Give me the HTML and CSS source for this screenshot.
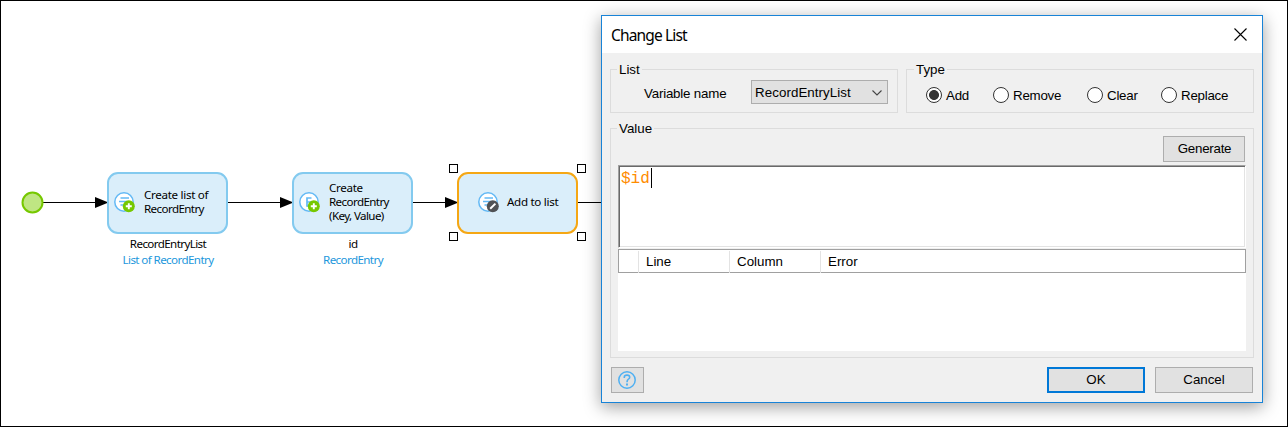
FILE: index.html
```html
<!DOCTYPE html>
<html lang="en">
<head>
<meta charset="utf-8">
<title>Change List</title>
<link rel="stylesheet" href="styles.css">
</head>
<body>
<div class="canvas">
  <svg class="wires" width="620" height="425" viewBox="1 1 620 425">
    <g stroke="#000" stroke-width="1" shape-rendering="crispEdges">
      <path d="M43 202.500H96M227 202.500H281M412 202.500H446M577 202.500H602"/>
    </g>
    <path d="M95 197l13.500 5.500-13.500 5.500zM280 197l13.500 5.500-13.500 5.500zM445 197l13.500 5.500-13.500 5.500z"/>
    <circle cx="32.500" cy="202.500" r="10" fill="#bfe683" stroke="#76c800" stroke-width="2"/>
  </svg>

  <div class="node node-list">
    <svg class="badge" width="22" height="22" viewBox="0 0 22 22">
      <circle cx="10" cy="10" r="9.200" fill="#fff" stroke="#63b9f5" stroke-width="1.500"/>
      <path d="M6.500 6h8.500M5 9.500h8.500M6.500 13h6" stroke="#63b9f5" stroke-width="1.500"/>
      <circle cx="14.800" cy="14.200" r="6" fill="#76c800"/>
      <path d="M11.800 14.200h6M14.800 11.200v6" stroke="#fff" stroke-width="1.900"/>
    </svg>
    <span class="node-text t-create"><span class="loose">Create list of</span><br>RecordEntry</span>
  </div>
  <div class="caption cap-list"><span>RecordEntryList</span><span class="kind">List of RecordEntry</span></div>

  <div class="node node-entry">
    <svg class="badge" width="22" height="22" viewBox="0 0 22 22">
      <circle cx="10" cy="10" r="9.200" fill="#fff" stroke="#63b9f5" stroke-width="1.500"/>
      <path d="M12.500 6h-4.500v8h4.500M8 10h4" fill="none" stroke="#63b9f5" stroke-width="1.700"/>
      <circle cx="14.800" cy="14.200" r="6" fill="#76c800"/>
      <path d="M11.800 14.200h6M14.800 11.200v6" stroke="#fff" stroke-width="1.900"/>
    </svg>
    <span class="node-text t-entry"><span class="loose">Create</span><br>RecordEntry<br>(Key, Value)</span>
  </div>
  <div class="caption cap-entry"><span>id</span><span class="kind">RecordEntry</span></div>

  <div class="node node-add">
    <svg class="badge" width="22" height="22" viewBox="0 0 22 22">
      <circle cx="10" cy="10" r="9.200" fill="#fff" stroke="#63b9f5" stroke-width="1.500"/>
      <path d="M6.500 6h8.500M5 9.500h8.500M6.500 13h6" stroke="#63b9f5" stroke-width="1.500"/>
      <circle cx="14.800" cy="14.200" r="6" fill="#505255"/>
      <path d="M12.200 16.800l5.200-5.200" stroke="#fff" stroke-width="2"/>
    </svg>
    <span class="node-text loose">Add to list</span>
  </div>
  <i class="handle h-tl"></i><i class="handle h-tr"></i><i class="handle h-bl"></i><i class="handle h-br"></i>

  <div class="dialog">
    <div class="titlebar">
      <span class="title">Change List</span>
      <svg width="13" height="13" viewBox="0 0 13 13"><path d="M.5 .5l12 12M12.500 .5l-12 12" stroke="#000" stroke-width="1.100"/></svg>
    </div>
    <div class="body">
      <div class="top">
        <section class="group group-list">
          <span class="legend">List</span>
          <label class="varname">Variable name</label>
          <div class="combo"><span>RecordEntryList</span>
            <svg width="10" height="6" viewBox="0 0 10 6"><path d="M.5 .5l4.500 4.500 4.500-4.500" fill="none" stroke="#444" stroke-width="1.100"/></svg>
          </div>
        </section>
        <section class="group group-type">
          <span class="legend legend-type">Type</span>
          <div class="radios">
            <label class="radio"><i class="dot on"></i>Add</label>
            <label class="radio"><i class="dot"></i>Remove</label>
            <label class="radio"><i class="dot"></i>Clear</label>
            <label class="radio"><i class="dot"></i>Replace</label>
          </div>
        </section>
      </div>
      <section class="group group-value">
        <span class="legend">Value</span>
        <div class="button generate">Generate</div>
        <div class="editor"><span class="code">$id</span><i class="caret"></i></div>
        <div class="table">
          <div class="thead"><span></span><span>Line</span><span>Column</span><span>Error</span></div>
        </div>
      </section>
      <div class="footer">
        <div class="button help">
          <svg width="18" height="18" viewBox="0 0 18 18" fill="none" stroke="#4fb0f2">
            <circle cx="9" cy="9" r="8.200" stroke-width="1.500"/>
            <path d="M6.300 7V6q0-1.900 2.700-1.900t2.700 2.100q0 1.200-1.300 1.900Q9 8.900 9 11.200" stroke-width="1.600"/>
            <path d="M9 12.500v2" stroke-width="2"/>
          </svg>
        </div>
        <div class="button ok">OK</div>
        <div class="button cancel">Cancel</div>
      </div>
    </div>
  </div>
</div>
</body>
</html>
```
FILE: styles.css
```css
* { box-sizing: border-box; }
body { margin: 0; background: #fff; color: #000; font: 13.33px/16px "Liberation Sans", Arial, sans-serif; }
.canvas { position: relative; width: 1288px; height: 427px; border: 1px solid #000; overflow: hidden; }
.wires { position: absolute; left: 0; top: 0; }

/* diagram nodes */
.node { position: absolute; top: 170.500px; width: 121px; height: 62px; display: flex; align-items: center; gap: 7px; padding-left: 5px; border: 2px solid #83caef; border-radius: 11px; background: #daeefa; }
.node-list { left: 106px; }
.node-entry { left: 291px; }
.node-add { left: 456px; padding-left: 19px; border-color: #f5a714; }
.badge { flex: none; }
.node-text, .caption { font: 11.600px/14px "Noto Sans", "Open Sans", sans-serif; letter-spacing: -0.600px; white-space: nowrap; }
.node-text { padding-bottom: 2px; }
.node-text.loose, .loose { letter-spacing: -0.300px; }
.t-create { margin-left: 1px; }
.t-entry { margin-left: 1px; padding-bottom: 1px; }
.caption { position: absolute; top: 236px; width: 140px; display: flex; flex-direction: column; gap: 2px; align-items: center; }
.cap-list { left: 97px; }
.cap-entry { left: 282px; }
.kind { color: #1c97dc; }
.handle { position: absolute; width: 9px; height: 9px; border: 1px solid #000; background: #fff; }
.h-tl { left: 448px; top: 163px; }
.h-tr { left: 576px; top: 163px; }
.h-bl { left: 448px; top: 231px; }
.h-br { left: 576px; top: 231px; }

/* dialog window */
.dialog { position: absolute; left: 600px; top: 14px; width: 662px; height: 388px; border: 1px solid #1883d7; background: #f0f0f0; box-shadow: 0 4px 16px rgba(0,0,0,.38); }
.titlebar { height: 37px; padding: 0 15px 0 9px; display: flex; align-items: center; justify-content: space-between; background: #fff; }
.title { font: 15.500px/20px "Noto Sans", "Open Sans", sans-serif; letter-spacing: -0.850px; }
.body { padding: 16px 8px 0; }
.top { display: flex; gap: 8px; }
.group { position: relative; border: 1px solid #dcdcdc; }
.legend { position: absolute; left: 6px; top: -8px; padding: 0 2px; background: #f0f0f0; }
.legend-type { left: 7px; }
.group-list { width: 288px; height: 44px; display: flex; padding: 10px 9px 0 33px; justify-content: space-between; }
.varname { margin-top: 6px; letter-spacing: -0.200px; }
.combo { width: 137px; height: 24px; padding: 1px 5px 0 3px; display: flex; align-items: center; justify-content: space-between; border: 1px solid #adadad; background: #e1e1e1; letter-spacing: 0.070px; }
.group-type { width: 348px; height: 44px; }
.radios { display: grid; grid-template-columns: 67px 94px 74px auto; padding: 17px 0 0 19px; letter-spacing: -0.250px; }
.radio { display: flex; gap: 4px; line-height: 18px; }
.dot { flex: none; width: 16px; height: 16px; border: 1px solid #333; border-radius: 50%; background: #fff; }
.dot.on { background: radial-gradient(circle, #333 4.600px, #fff 5.300px); }
.group-value { height: 230px; margin-top: 15px; padding: 7px 7px 0; display: flex; flex-direction: column; }
.button { height: 26px; display: flex; align-items: center; justify-content: center; border: 1px solid #adadad; background: #e1e1e1; }
.generate { width: 82px; padding-left: 1px; margin-right: 1px; align-self: flex-end; letter-spacing: -0.250px; }
.editor { height: 83px; margin-top: 3px; padding: 3px 0 0 1px; display: flex; border: 1px solid #a0a0a0; border-right-color: #fff; border-bottom-color: #fff; box-shadow: inset 1px 1px #696969, inset -1px -1px #e3e3e3; background: #fff; }
.code { color: #ff8c00; font: 16px/20px "Liberation Mono", monospace; padding-left: 1px; }
.caret { width: 1px; height: 20px; background: #000; margin: -1px 0 0 1px; }
.table { height: 102px; margin-top: 1px; background: #fff; }
.thead { height: 24px; display: grid; grid-template-columns: 20px 91px 91px 1fr; border: 1px solid #a0a0a0; padding-top: 1px; line-height: 22px; }
.thead span { padding-left: 7px; border-right: 1px solid #e3e3e3; }
.thead span:last-child { border-right: 0; }
.footer { display: flex; margin: 9px 1px 0; gap: 10px; }
.help { width: 33px; margin-right: auto; padding-right: 1px; }
.ok, .cancel { width: 98px; }
.ok { border: 2px solid #0078d7; }
```
